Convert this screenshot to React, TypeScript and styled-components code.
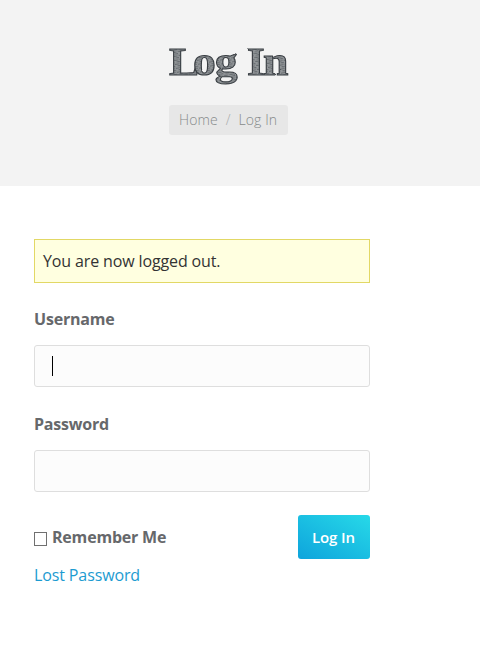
import React from "react";
import styled, { createGlobalStyle } from "styled-components";

const GlobalStyle = createGlobalStyle`
  * { box-sizing: border-box; }
  body { margin: 0; background: #fff; font-family: "Open Sans", sans-serif; font-size: 16px; color: #66686b; }
`;

const Page = styled.div`
  min-height: 646px;
`;

const Header = styled.header`
  height: 186px;
  padding: 40px 0 0 169px;
  background: #f3f3f3;
  display: flex;
  flex-direction: column;
  align-items: flex-start;
`;

const Title = styled.h1`
  margin: 0 0 15px;
  height: 50px;
  svg { display: block; overflow: visible; }
`;

const Breadcrumbs = styled.nav`
  display: flex;
  align-items: center;
  width: 119px;
  height: 30px;
  padding: 0 10px 2px;
  border-radius: 3px;
  background: #e7e7e7;
  color: #868a8a;
  font-size: 14px;
  font-weight: 300;
  letter-spacing: 0.08px;
  white-space: nowrap;
`;

const Crumb = styled.span``;

const Divider = styled.span`
  margin: 0 8px;
  color: #a9acac;
`;

const Form = styled.form`
  width: 336px;
  margin: 53px 0 0 34px;
`;

const Notice = styled.p`
  height: 44px;
  margin: 0 0 24px;
  padding: 0 8px;
  border: 1px solid #e2d865;
  background: #ffffe0;
  color: #333;
  line-height: 43px;
  letter-spacing: -0.13px;
`;

const Label = styled.label`
  display: block;
  height: 24px;
  margin-bottom: 14px;
  font-weight: 700;
  line-height: 24px;
  letter-spacing: -0.2px;
`;

const Field = styled.div`
  display: flex;
  align-items: center;
  height: 42px;
  margin-bottom: 25px;
  padding-left: 17px;
  border: 1px solid #dedede;
  border-radius: 3px;
  background: #fcfcfc;
`;

const Caret = styled.span`
  width: 1px;
  height: 20px;
  background: #000;
`;

const Actions = styled.div`
  display: flex;
  justify-content: space-between;
  align-items: center;
  height: 44px;
  margin-top: -2px;
`;

const Remember = styled.label`
  display: flex;
  align-items: center;
  gap: 5px;
  font-weight: 700;
  line-height: 24px;
  letter-spacing: -0.2px;
`;

const Checkbox = styled.span`
  width: 13px;
  height: 14px;
  margin-top: 4px;
  border: 1px solid #707070;
  background: #fff;
`;

const Submit = styled.button`
  width: 72px;
  height: 44px;
  padding: 0 1px 1px 0;
  border: 0;
  border-radius: 3px;
  background: linear-gradient(30deg, #0ea4dc, #27d9e8);
  color: #fff;
  font: 600 15px "Open Sans", sans-serif;
  letter-spacing: -0.1px;
`;

const LostLink = styled.a`
  display: inline-block;
  margin-top: 4px;
  color: #1c9bd1;
  line-height: 24px;
  letter-spacing: -0.12px;
  text-decoration: none;
`;

const SketchTitle = () => (
  <svg width="120" height="50" viewBox="0 0 120 50">
    <defs>
      <pattern id="hatch" width="5" height="4" patternUnits="userSpaceOnUse" patternTransform="rotate(-12)">
        <rect width="5" height="4" fill="#919598" />
        <path d="M0 1H4M2 3H5" stroke="#585d62" strokeWidth=".8" />
      </pattern>
      <filter id="rough" x="-5%" y="-10%" width="110%" height="120%">
        <feTurbulence type="fractalNoise" baseFrequency=".25" numOctaves="2" seed="4" />
        <feDisplacementMap in="SourceGraphic" scale="1.5" />
      </filter>
    </defs>
    <text
      transform="scale(1.13 1)"
      x="0 21.3 40.6 61 69 83.3"
      y="34.8"
      fill="url(#hatch)"
      stroke="#393e43"
      strokeWidth="1"
      fontFamily="Liberation Serif, serif"
      fontWeight="700"
      fontSize="40.5"
      filter="url(#rough)"
    >
      Log In
    </text>
  </svg>
);

export default function App() {
  return (
    <Page>
      <GlobalStyle />
      <Header>
        <Title><SketchTitle /></Title>
        <Breadcrumbs>
          <Crumb>Home</Crumb>
          <Divider>/</Divider>
          <Crumb>Log In</Crumb>
        </Breadcrumbs>
      </Header>
      <Form>
        <Notice>You are now logged out.</Notice>
        <Label>Username</Label>
        <Field><Caret /></Field>
        <Label>Password</Label>
        <Field />
        <Actions>
          <Remember><Checkbox />Remember Me</Remember>
          <Submit type="button">Log In</Submit>
        </Actions>
        <LostLink>Lost Password</LostLink>
      </Form>
    </Page>
  );
}
